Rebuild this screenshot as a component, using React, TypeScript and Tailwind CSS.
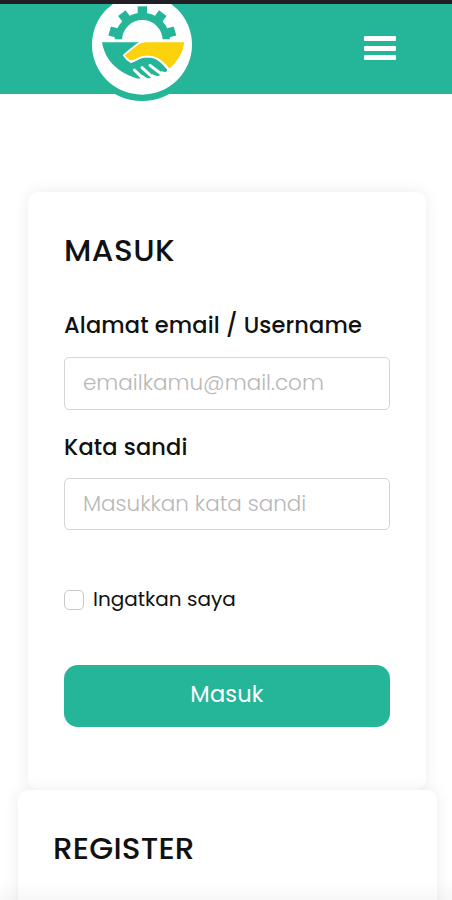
import { useState } from "react";

const TEETH = [-74, -37, 0, 37, 74];

function Logo() {
  return (
    <svg
      viewBox="0 0 375 330"
      className="absolute left-20 -top-1 h-[110px] w-[125px]"
      aria-hidden="true"
    >
      <circle cx="186" cy="134" r="169" fill="#25b598" />
      <circle cx="186" cy="134" r="150" fill="#fff" />
      <clipPath id="gear">
        <rect x="60" y="10" width="250" height="108" />
      </clipPath>
      <g clipPath="url(#gear)" fill="#25b598">
        <circle cx="187" cy="121" r="72" fill="none" stroke="#25b598" strokeWidth="22" />
        {TEETH.map((deg) => (
          <rect
            key={deg}
            x="173"
            y="19"
            width="28"
            height="26"
            transform={`rotate(${deg} 187 121)`}
          />
        ))}
      </g>
      <path
        d="M66 127H180L134 166L152 190L190 172L222 172L244 190L261 208Q263 217 253 216L243 213L241 225Q233 231 223 225L215 222L213 233Q205 238 196 231L186 224L182 234Q176 238 165 233C112 216 75 180 66 127Z"
        fill="#25b598"
      />
      <path
        d="M163 210L190 236M186 203L220 234M210 196L248 225"
        fill="none"
        stroke="#fff"
        strokeWidth="9"
        strokeLinecap="round"
      />
      <path
        d="M196 127H313Q308 172 268 206Q256 190 240 179Q222 166 200 167Q180 168 165 178Q152 186 142 175L134 166Q162 142 175 133Q184 127 196 127Z"
        fill="#fbd20b"
      />
      <path
        d="M268 210Q256 193 240 182Q222 169 200 170Q180 171 166 181Q152 189 141 178L131 166Q158 143 173 132Q180 127 190 125"
        fill="none"
        stroke="#fff"
        strokeWidth="5"
        strokeLinejoin="round"
      />
    </svg>
  );
}

export default function App() {
  const [email, setEmail] = useState("");
  const [password, setPassword] = useState("");
  const [remember, setRemember] = useState(false);

  const labelClass =
    "block whitespace-nowrap text-[22.5px] font-medium leading-8 tracking-[0.15px]";
  const inputClass =
    "block w-full rounded-[5px] border-[1.5px] border-[#d3d5d6] bg-white px-[18px] pb-0.5 text-[21.5px] font-light text-[#222] placeholder:text-[#b8b8b8] focus:outline-none";

  return (
    <div className="relative h-[900px] overflow-hidden bg-white font-[Poppins,Inter,sans-serif] text-[#111]">
      <div className="relative z-10 h-1 bg-[#211f24]" />
      <header className="relative flex h-[89.5px] justify-end bg-[#25b598] pr-14 pt-8">
        <Logo />
        <button
          type="button"
          aria-label="Menu"
          className="flex h-6 w-8 flex-col justify-between"
        >
          <span className="h-[5px] w-full rounded-[1px] bg-white" />
          <span className="h-[5px] w-full rounded-[1px] bg-white" />
          <span className="h-[5px] w-full rounded-[1px] bg-white" />
        </button>
      </header>

      <main className="pt-[98.5px]">
        <section className="ml-7 h-[598px] w-[398px] rounded-[10px] bg-white px-[36px] pt-[36px] shadow-[0_0_16px_rgba(0,0,0,0.08)]">
          <h1 className="text-[31px] font-medium leading-[44px] tracking-[0.5px]">
            MASUK
          </h1>

          <form onSubmit={(e) => e.preventDefault()}>
            <label htmlFor="email" className={`${labelClass} mt-[37px]`}>
              Alamat email / Username
            </label>
            <input
              id="email"
              className={`${inputClass} mt-4 h-[53px]`}
              placeholder="emailkamu@mail.com"
              value={email}
              onChange={(e) => setEmail(e.target.value)}
            />

            <label htmlFor="password" className={`${labelClass} mt-[21px]`}>
              Kata sandi
            </label>
            <input
              id="password"
              type="password"
              className={`${inputClass} mt-[15px] h-[52px]`}
              placeholder="Masukkan kata sandi"
              value={password}
              onChange={(e) => setPassword(e.target.value)}
            />

            <label className="mt-[54px] flex h-8 items-center gap-[9px] text-[20px]">
              <input
                type="checkbox"
                className="size-5 appearance-none rounded-[5px] border-[1.5px] border-[#c8c8c8] checked:bg-[#25b598]"
                checked={remember}
                onChange={(e) => setRemember(e.target.checked)}
              />
              <span className="-mt-0.5">Ingatkan saya</span>
            </label>

            <button
              type="submit"
              className="mt-[49px] h-[62px] w-full rounded-[14px] bg-[#25b598] pb-0.5 text-[22.5px] tracking-[0.2px] text-white"
            >
              Masuk
            </button>
          </form>
        </section>

        <section className="relative ml-[17.5px] h-[300px] w-[419px] rounded-[10px] bg-white px-[35.5px] pt-[36px] shadow-[0_0_16px_rgba(0,0,0,0.08)]">
          <h2 className="text-[31px] font-medium leading-[44px] tracking-[0.2px]">
            REGISTER
          </h2>
        </section>
      </main>
      <div className="pointer-events-none absolute inset-x-0 bottom-0 h-5 bg-linear-to-b from-transparent to-black/3" />
    </div>
  );
}
